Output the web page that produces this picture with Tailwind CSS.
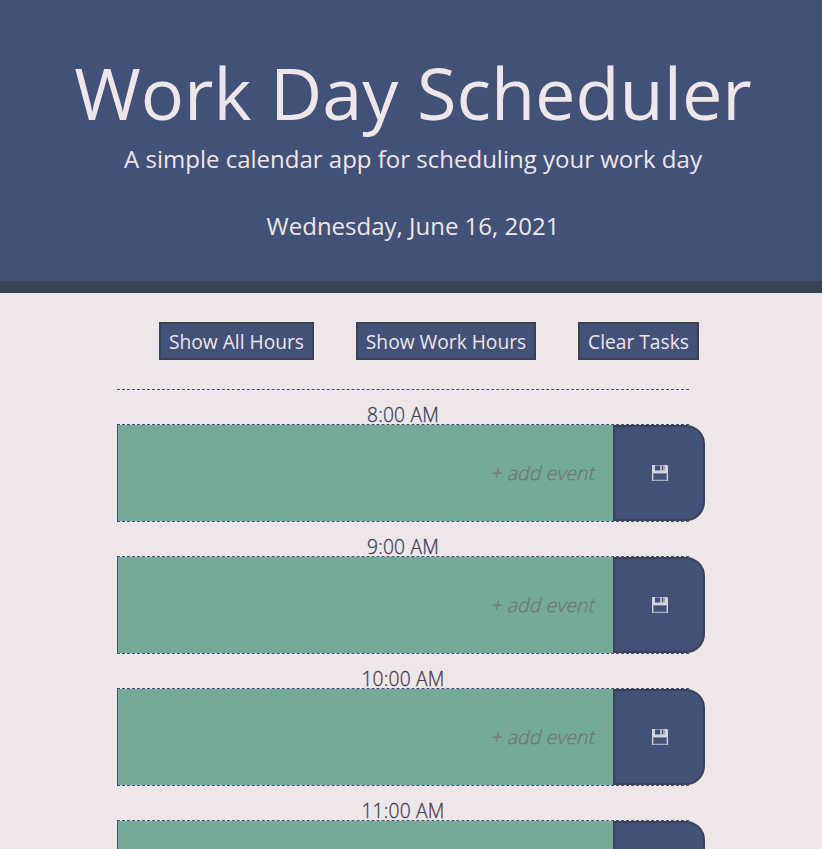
<!DOCTYPE html>
<html lang="en">
<head>
<meta charset="utf-8">
<title>Work Day Scheduler</title>
<script src="https://cdn.jsdelivr.net/npm/@tailwindcss/browser@4"></script>
</head>
<body class="h-[849px] overflow-hidden bg-[#efe6e9] font-['Open_Sans',sans-serif] text-[#3c4255]">
<header class="h-[293px] border-b-12 border-[#3c4255] bg-[#425178] pt-[49px] pl-1 text-center text-[#efe6e9]">
  <h1 class="text-[72px] leading-[86px] whitespace-nowrap">Work Day Scheduler</h1>
  <p class="mt-1.5 text-2xl leading-9">A simple calendar app for scheduling your work day</p>
  <p class="mt-[31px] text-2xl leading-9">Wednesday, June 16, 2021</p>
</header>
<nav class="mt-[29px] ml-[159px] flex gap-[42px] text-[19.2px] text-[#efe6e9]">
  <button class="h-[38px] w-[155px] border-2 border-[#3c4255] bg-[#425178] pt-0.5 whitespace-nowrap">Show All Hours</button>
  <button class="h-[38px] w-[180px] border-2 border-[#3c4255] bg-[#425178] pt-0.5 whitespace-nowrap">Show Work Hours</button>
  <button class="h-[38px] w-[121px] border-2 border-[#3c4255] bg-[#425178] pt-0.5 whitespace-nowrap">Clear Tasks</button>
</nav>
<main id="hours" class="mt-[29px] ml-[117px] h-[460px] w-[572px] overflow-x-visible overflow-y-clip border-t border-dashed border-[#425178]"></main>
<template id="row">
  <section>
    <h2 class="flex h-[34px] items-end justify-center text-[19.2px] leading-[19px] font-light tracking-[0.2px] [-webkit-text-stroke:0.3px_#3c4255]"></h2>
    <div class="flex h-[98px] border-y border-dashed border-[#425178]">
      <div class="flex w-[496px] shrink-0 items-center justify-end border-l border-solid border-[#425178] bg-[#73ab98] pr-[17px] text-[19.2px] font-light tracking-[0.2px] text-[#757575] [-webkit-text-stroke:0.3px_#757575]"><span class="block -skew-x-14">+ add event</span></div>
      <button class="flex w-[92px] shrink-0 items-center justify-center rounded-r-[19px] border-2 border-solid border-[#3c4255] bg-[#425178] pl-0.5" aria-label="Save">
        <svg class="size-4" viewBox="0 0 16 16"><path fill="#d5d5d7" fill-rule="evenodd" d="M0 0H15L16 1V16H0ZM3 .5V5.5H12.5V.5ZM1.2 8.2V15.2H14.8V8.2Z"/><path fill="#b5b9c4" d="M8 0H12.5V6H8Z"/><path fill="#425178" d="M10 .8H11.2V5H10Z"/><path fill="none" stroke="#8e97ad" stroke-width=".6" d="M1.5 8.5H14.5V14.9H1.5Z"/></svg>
      </button>
    </div>
  </section>
</template>
<script>
const list = document.getElementById('hours');
for (const label of ['8:00 AM', '9:00 AM', '10:00 AM', '11:00 AM']) {
  const row = document.getElementById('row').content.cloneNode(true);
  row.querySelector('h2').textContent = label;
  // the last visible row is cut off, so its prompt is out of view
  if (label === '11:00 AM') row.querySelector('span').remove();
  list.append(row);
}
</script>
</body>
</html>
